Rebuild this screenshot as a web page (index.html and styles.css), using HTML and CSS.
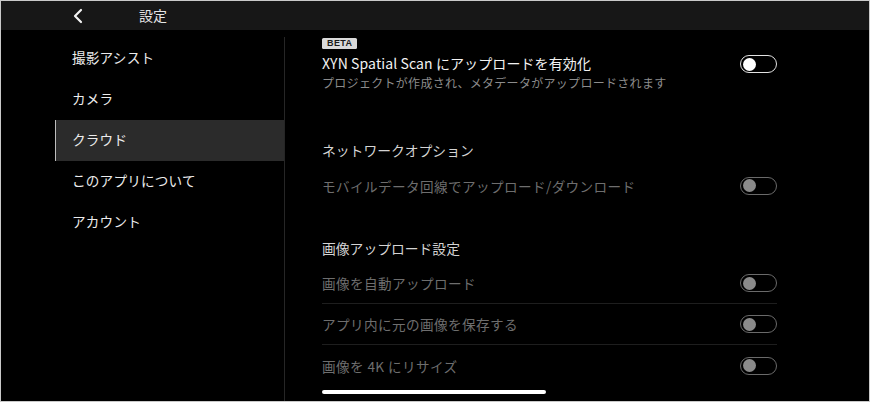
FILE: index.html
```html
<!DOCTYPE html>
<html lang="ja">
<head>
<meta charset="utf-8">
<link rel="stylesheet" href="styles.css">
</head>
<body>
<div class="frame">
  <header class="topbar">
    <svg class="back" width="12" height="16" viewBox="0 0 12 16"><path d="M9 2 L3 8 L9 14" fill="none" stroke="#f2f2f2" stroke-width="2.2" stroke-linecap="round" stroke-linejoin="round"/></svg>
    <span class="title">設定</span>
  </header>
  <div class="main">
    <nav class="sidebar">
      <div class="nav-item">撮影アシスト</div>
      <div class="nav-item">カメラ</div>
      <div class="nav-item selected">クラウド</div>
      <div class="nav-item">このアプリについて</div>
      <div class="nav-item">アカウント</div>
    </nav>
    <section class="content">
      <div class="feature">
        <div class="feature-text">
          <span class="badge">BETA</span>
          <div class="feature-title">XYN Spatial Scan にアップロードを有効化</div>
          <div class="feature-sub">プロジェクトが作成され、メタデータがアップロードされます</div>
        </div>
        <div class="toggle on feature-toggle"><span class="knob"></span></div>
      </div>

      <h2 class="heading first">ネットワークオプション</h2>
      <div class="row">
        <span class="label">モバイルデータ回線でアップロード/ダウンロード</span>
        <div class="toggle"><span class="knob"></span></div>
      </div>

      <h2 class="heading second">画像アップロード設定</h2>
      <div class="row divided">
        <span class="label">画像を自動アップロード</span>
        <div class="toggle"><span class="knob"></span></div>
      </div>
      <div class="row divided">
        <span class="label">アプリ内に元の画像を保存する</span>
        <div class="toggle"><span class="knob"></span></div>
      </div>
      <div class="row">
        <span class="label">画像を 4K にリサイズ</span>
        <div class="toggle"><span class="knob"></span></div>
      </div>
      <div class="home-bar"></div>
    </section>
  </div>
</div>
</body>
</html>
```

FILE: styles.css
```css
* { box-sizing: border-box; }
html, body {
  margin: 0;
  padding: 0;
  background: #000;
}
body {
  width: 870px;
  height: 402px;
  overflow: hidden;
  font-family: "Noto Sans CJK JP", "Noto Sans", sans-serif;
}
.frame {
  width: 870px;
  height: 402px;
  border: 1px solid #c9c9c9;
  background: #000;
  display: flex;
  flex-direction: column;
}
.topbar {
  height: 29px;
  flex: none;
  background: #171717;
  display: flex;
  align-items: center;
  padding-left: 71px;
}
.back {
  display: block;
}
.title {
  margin-left: 55px;
  padding-bottom: 2px;
  color: #e6e6e6;
  font-size: 14px;
  line-height: 20px;
}
.main {
  flex: 1;
  display: flex;
  padding-top: 7px;
  min-height: 0;
}
.sidebar {
  width: 284px;
  padding-left: 54px;
  padding-top: 1px;
  border-right: 1px solid #262626;
  flex: none;
}
.nav-item {
  height: 41px;
  display: flex;
  align-items: center;
  padding-left: 16px;
  padding-bottom: 3px;
  border-left: 1px solid transparent;
  color: #ececec;
  font-size: 13.6px;
  letter-spacing: 0.2px;
}
.nav-item.selected {
  background: #2b2b2b;
  border-left-color: #bdbdbd;
}
.content {
  width: 492px;
  padding-left: 37px;
  padding-top: 1px;
  display: flex;
  flex-direction: column;
}
.feature {
  display: flex;
  justify-content: space-between;
  align-items: flex-start;
}
.feature-text {
  display: flex;
  flex-direction: column;
  align-items: flex-start;
}
.badge {
  display: block;
  height: 11px;
  padding: 0 5px;
  background: #d9d9d9;
  color: #1a1a1a;
  font-family: "Liberation Sans", "Noto Sans", sans-serif;
  font-weight: bold;
  font-size: 9px;
  line-height: 11px;
  border-radius: 1.5px;
  margin-bottom: 4px;
  letter-spacing: 0.4px;
}
.feature-title {
  color: #f2f2f2;
  font-size: 14px;
  line-height: 20px;
  letter-spacing: 0.1px;
}
.feature-sub {
  color: #8c8c8c;
  font-size: 12px;
  line-height: 20px;
  letter-spacing: 0.3px;
}
.feature-toggle {
  margin-top: 17px;
}
.heading {
  margin: 0;
  font-weight: normal;
  font-size: 13.8px;
  line-height: 20px;
  color: #d4d4d4;
}
.heading.first {
  margin-top: 47px;
  margin-bottom: 5px;
}
.heading.second {
  margin-top: 32px;
  margin-bottom: 5px;
}
.row {
  height: 41px;
  display: flex;
  justify-content: space-between;
  align-items: center;
}
.row.divided {
  border-bottom: 1px solid #1e1e1e;
}
.label {
  color: #6e6e6e;
  font-size: 13.6px;
  letter-spacing: 0.4px;
}
.toggle {
  width: 37px;
  height: 18px;
  border: 1.5px solid #6a6a6a;
  border-radius: 9px;
  display: flex;
  align-items: center;
  padding-left: 2px;
  flex: none;
}
.toggle .knob {
  width: 13px;
  height: 13px;
  border-radius: 50%;
  background: #8a8a8a;
}
.toggle.on {
  border-color: #e2e2e2;
}
.toggle.on .knob {
  background: #fff;
}
.home-bar {
  margin-top: 4px;
  width: 224px;
  height: 4px;
  border-radius: 2px;
  background: #fff;
}
```
